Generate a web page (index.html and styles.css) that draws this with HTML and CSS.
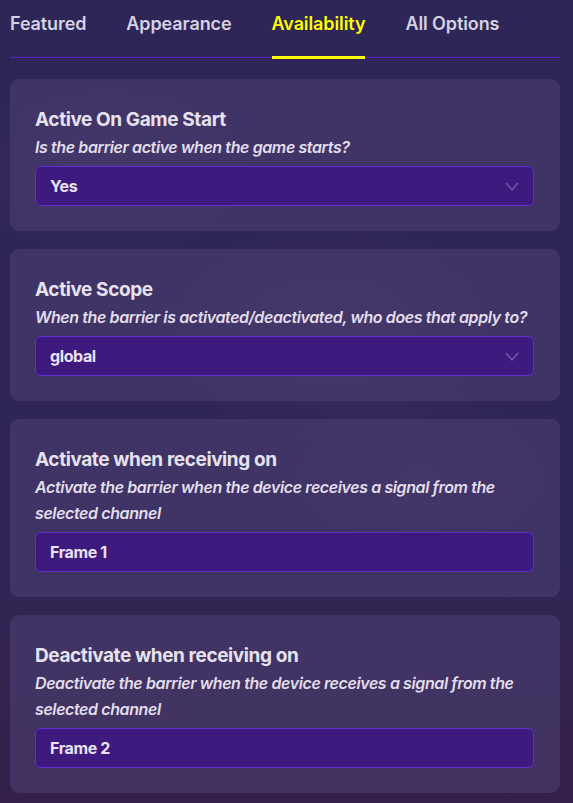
FILE: index.html
```html
<!DOCTYPE html>
<html lang="en">
<head>
<meta charset="utf-8">
<title>Availability</title>
<link rel="stylesheet" href="styles.css">
</head>
<body>
<div class="page">
  <nav class="tabs">
    <div class="tab">Featured</div>
    <div class="tab">Appearance</div>
    <div class="tab active">Availability</div>
    <div class="tab">All Options</div>
  </nav>
  <div class="cards">
    <section class="card">
      <h2 class="card-title">Active On Game Start</h2>
      <p class="card-desc">Is the barrier active when the game starts?</p>
      <div class="field select">
        <span class="field-value">Yes</span>
        <svg class="chevron" viewBox="0 0 14 9" width="14" height="9"><path d="M1 1 L7 8 L13 1" fill="none" stroke="currentColor" stroke-width="1.3"/></svg>
      </div>
    </section>
    <section class="card">
      <h2 class="card-title">Active Scope</h2>
      <p class="card-desc">When the barrier is activated/deactivated, who does that apply to?</p>
      <div class="field select">
        <span class="field-value">global</span>
        <svg class="chevron" viewBox="0 0 14 9" width="14" height="9"><path d="M1 1 L7 8 L13 1" fill="none" stroke="currentColor" stroke-width="1.3"/></svg>
      </div>
    </section>
    <section class="card">
      <h2 class="card-title">Activate when receiving on</h2>
      <p class="card-desc">Activate the barrier when the device receives a signal from the selected channel</p>
      <div class="field">
        <span class="field-value">Frame 1</span>
      </div>
    </section>
    <section class="card">
      <h2 class="card-title">Deactivate when receiving on</h2>
      <p class="card-desc">Deactivate the barrier when the device receives a signal from the selected channel</p>
      <div class="field">
        <span class="field-value">Frame 2</span>
      </div>
    </section>
  </div>
</div>
</body>
</html>
```

FILE: styles.css
```css
html, body {
  margin: 0;
  padding: 0;
}
body {
  width: 573px;
  height: 803px;
  overflow: hidden;
  font-family: Inter, "Noto Sans", "Liberation Sans", sans-serif;
  color: #e5e1ef;
  background:
    radial-gradient(ellipse 160px 90px at 110px 170px, rgba(90, 70, 120, 0.25), transparent),
    radial-gradient(ellipse 180px 110px at 330px 330px, rgba(110, 70, 120, 0.25), transparent),
    radial-gradient(ellipse 150px 90px at 420px 480px, rgba(90, 70, 120, 0.2), transparent),
    linear-gradient(180deg, #2e2657 0%, #2f2556 70%, #34234f 85%, #33204a 100%);
}
.page {
  width: 550px;
  margin-left: 10px;
}
.tabs {
  display: flex;
  gap: 40px;
  height: 57px;
  border-bottom: 1px solid #5a23c8;
}
.tab {
  position: relative;
  padding-top: 12px;
  font-size: 18px;
  line-height: 24px;
  font-weight: 600;
  color: #d6d1e4;
  letter-spacing: -0.1px;
}
.tab.active {
  color: #ffff00;
}
.tab.active::after {
  content: "";
  position: absolute;
  left: 0;
  right: 0;
  bottom: -2px;
  height: 3px;
  background: #ffff00;
}
.cards {
  display: flex;
  flex-direction: column;
  gap: 18px;
  margin-top: 21px;
}
.card {
  background: rgba(74, 62, 112, 0.62);
  border-radius: 9px;
  padding: 28px 26px 25px 25px;
}
.card-title {
  margin: 0;
  font-size: 19px;
  line-height: 26px;
  font-weight: 700;
  color: #e6e2ef;
  letter-spacing: -0.4px;
}
.card-desc {
  margin: 1px 0 6px;
  font-size: 16px;
  line-height: 26px;
  font-weight: 600;
  font-style: italic;
  color: #e2deec;
  letter-spacing: -0.4px;
}
.field {
  display: flex;
  align-items: center;
  justify-content: space-between;
  height: 38px;
  padding: 0 14px 0 14px;
  background: #3e1a7e;
  border: 1px solid #5e2fcc;
  border-radius: 6px;
}
.field-value {
  font-size: 16px;
  font-weight: 700;
  color: #e8e2f4;
  letter-spacing: -0.4px;
}
.chevron {
  color: #7b5ab6;
}
```
